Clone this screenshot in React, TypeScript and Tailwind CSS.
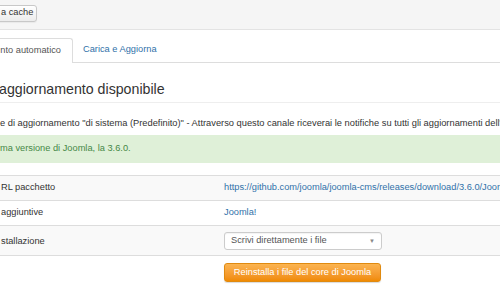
import React from 'react';

const font = { fontFamily: '"Liberation Sans", Arial, sans-serif' };

function Toolbar() {
  return (
    <div className="h-[30px] bg-[#f5f5f5] border-b border-[#e3e3e3] flex items-center">
      <button className="ml-[-20px] h-[17px] mt-[-3px] pr-[3px] pl-[6px] flex items-center rounded-[3px] border border-[#c8c8c8] bg-gradient-to-b from-white to-[#ececec] text-[9.25px] text-[#333] shadow-[0_1px_1px_rgba(0,0,0,0.05)]">
        <span className="pl-[14px]">a cache</span>
      </button>
    </div>
  );
}

function Tabs() {
  return (
    <div className="mt-[8px] flex h-[25px] border-b border-[#dddddd]">
      <div className="ml-[-10px] w-[83px] h-[25px] flex items-center justify-end pr-[11px] bg-white border-t border-r border-[#dddddd] rounded-tr-[3px] text-[9.25px] text-[#555]">
        nto automatico
      </div>
      <div className="ml-[10px] h-[24px] flex items-center text-[9.25px] text-[#3071a9]">
        Carica e Aggiorna
      </div>
    </div>
  );
}

function Row({ label, children, striped, tall }: { label: string; children: React.ReactNode; striped?: boolean; tall?: boolean }) {
  return (
    <div
      className={`flex border-b border-[#dddddd] ${striped ? 'bg-[#f9f9f9]' : 'bg-white'} ${tall ? 'h-[30px] pt-[6px]' : 'h-[25px] items-center'}`}
    >
      <div className={`w-[224px] shrink-0 pl-[1px] text-[9.25px] text-[#333] ${tall ? 'pt-[3px]' : ''}`}>{label}</div>
      <div className="min-w-0 flex-1 whitespace-nowrap text-[9.25px]">{children}</div>
    </div>
  );
}

export default function App() {
  return (
    <div className="w-[500px] h-[300px] overflow-hidden bg-white" style={font}>
      <Toolbar />
      <Tabs />

      <div className="mt-[15px] h-[25px] border-b border-[#eeeeee] flex items-start">
        <h2 className="ml-[-1px] text-[14.2px] leading-[22px] text-[#333] font-normal whitespace-nowrap">aggiornamento disponibile</h2>
      </div>

      <p className="mt-[14px] h-[12px] leading-[12px] text-[9.3px] text-[#333] whitespace-nowrap">
        e di aggiornamento "di sistema (Predefinito)" - Attraverso questo canale riceverai le notifiche su tutti gli aggiornamenti dell'area
      </p>

      <div className="mt-[6px] h-[28px] bg-[#dff0d8] flex items-center text-[9.25px] text-[#468847] whitespace-nowrap">
        ma versione di Joomla, la 3.6.0.
      </div>

      <div className="mt-[12px] border-t border-[#dddddd]">
        <Row label="RL pacchetto" striped>
          <span className="text-[#3071a9]">https://github.com/joomla/joomla-cms/releases/download/3.6.0/Joomla_3.6.0-Stable-Update_Package.zip</span>
        </Row>
        <Row label="aggiuntive">
          <span className="text-[#3071a9]">Joomla!</span>
        </Row>
        <Row label="stallazione" striped tall>
          <div className="w-[158px] h-[18px] flex items-center justify-between px-[6px] rounded-[3px] border border-[#cccccc] bg-white text-[#555] shadow-[inset_0_1px_1px_rgba(0,0,0,0.05)]">
            <span>Scrivi direttamente i file</span>
            <span className="text-[6px] text-[#888]">▼</span>
          </div>
        </Row>
      </div>

      <div className="mt-[7px] pl-[224px]">
        <button className="w-[157px] h-[19px] rounded-[3px] bg-gradient-to-b from-[#fbb450] to-[#f08a00] border border-[#e08a10] text-white text-[9.25px] flex items-center justify-center shadow-[0_1px_1px_rgba(0,0,0,0.15)]">
          Reinstalla i file del core di Joomla
        </button>
      </div>
    </div>
  );
}
